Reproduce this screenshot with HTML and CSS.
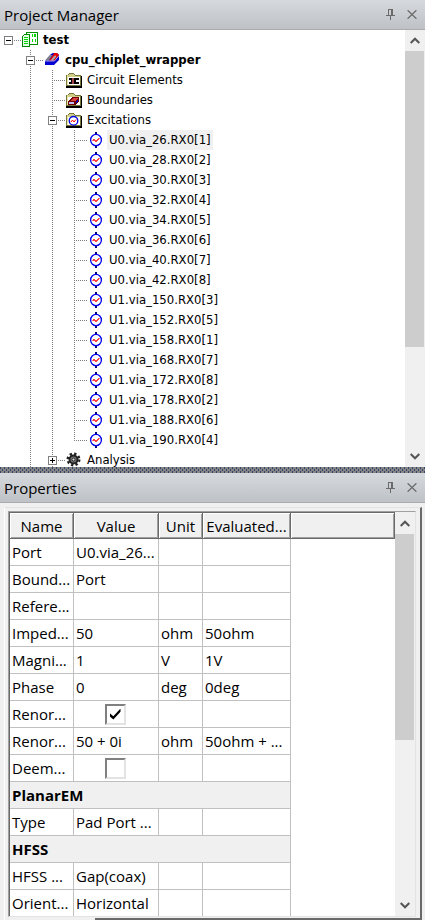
FILE: index.html
```html
<!DOCTYPE html>
<html lang="en">
<head>
<meta charset="utf-8">
<meta name="viewport" content="width=device-width, initial-scale=1">
<title>Project Manager</title>
<link rel="stylesheet" href="styles.css">
</head>
<body>
<svg class="defs" aria-hidden="true">
  <symbol id="pin" viewBox="0 0 9 11"><path d="M2 0h5v6h2v1H5v4H4V7H0V6h2zM3 1v5h2V1z" fill="#6a6a6a" fill-rule="evenodd"/></symbol>
  <symbol id="close" viewBox="0 0 10 9"><path d="M.6.3l8.800 8.400M9.400.3L.6 8.700" stroke="#6a6a6a" stroke-width="1.300" fill="none"/></symbol>
  <symbol id="up" viewBox="0 0 10 7"><path d="M.7 6L5 1.700 9.300 6" stroke="#555" stroke-width="2" fill="none"/></symbol>
  <symbol id="down" viewBox="0 0 10 7"><path d="M.7 1L5 5.300 9.300 1" stroke="#555" stroke-width="2" fill="none"/></symbol>
  <symbol id="port" viewBox="0 0 16 16">
    <path d="M7 0h2v3H7zM7 13h2v3H7z" fill="#000070"/>
    <ellipse cx="8" cy="8" rx="5.400" ry="5.700" fill="#fff" stroke="#0000e8" stroke-width="1.300"/>
    <path d="M4.500 8.500h1v-1h1v1h1v1h1v-1h1v-1h1v-1h1" fill="none" stroke="#f00" stroke-width="1"/>
  </symbol>
  <symbol id="folder" viewBox="0 0 16 16">
    <path d="M0 3h2V2h1V1h5v1h1v1h6v1h1v12H0z" fill="#000"/>
    <path d="M0 3h2V2h1V1h5v1h1v1h6v11H0z" fill="#77763a"/>
    <path d="M3 2h5v1h1v1h5v1H1V3h2z" fill="#cfcd86"/>
    <path d="M1 4h1v9H1z" fill="#e6e4a0"/>
    <path d="M2 5h12v8H2z" fill="#fff"/>
  </symbol>
</svg>

<main class="app">
  <section class="panel project" aria-label="Project Manager">
    <header class="titlebar">
      <h2 class="title">Project Manager</h2>
      <button class="tool" aria-label="Pin"><svg width="9" height="11"><use href="#pin"/></svg></button>
      <button class="tool" aria-label="Close"><svg width="10" height="9"><use href="#close"/></svg></button>
    </header>
    <div class="viewport">
      <ul class="tree">
        <li class="root">
          <div class="row strong"><span class="twig"><button class="toggle" aria-label="Collapse test"></button></span>
            <svg class="icon" viewBox="0 0 16 16" shape-rendering="crispEdges"><path d="M4 0h12v13H4z" fill="#009000"/><path d="M5 1h10v11H5z" fill="#fff"/><path d="M0 4l2-2h6v13H0z" fill="#008800"/><path d="M1 4l1-1h5v11H1z" fill="#e4ffe4"/><path d="M2 5h4v1H2zM2 7h4v1H2zM2 9h4v1H2zM2 11h4v1H2zM10 2h1v3h-1zM12 2h2v3h-2zM10 7h1v3h-1zM13 7h1v3h-1z" fill="#00d800"/></svg>
            <span class="label">test</span></div>
          <ul>
            <li>
              <div class="row strong"><span class="twig"><button class="toggle" aria-label="Collapse cpu_chiplet_wrapper"></button></span>
                <svg class="icon" viewBox="0 0 16 16"><path d="M1 9L7 2l2-1h4l2 2v5l-5 5H1z" fill="#0000d0"/><path d="M1 8.500L6 3h2.500L5 8.500z" fill="#808088"/><path d="M5 8.500L9 3l1-2h3l2 2-4.500 5.500z" fill="#e80000"/><path d="M6.500 8.500L10 4l2-.5V5L9 8.500z" fill="#a8a8b0"/><path d="M1 9h9.500L15 3.500" fill="none" stroke="#e8e8ff" stroke-width=".7"/></svg>
                <span class="label">cpu_chiplet_wrapper</span></div>
              <ul>
                <li><div class="row"><span class="twig"></span><svg class="icon" viewBox="0 0 16 16" shape-rendering="crispEdges"><use href="#folder"/><path d="M6 6h4v6H6z" fill="#a04040"/><path d="M3 6h3v2H3zM3 10h3v2H3zM10 6h3v2h-3zM10 10h3v2h-3zM5 6h1v6H5zM8 6h2v6H8z"/></svg><span class="label">Circuit Elements</span></div></li>
                <li><div class="row"><span class="twig"></span><svg class="icon" viewBox="0 0 16 16" shape-rendering="crispEdges"><use href="#folder"/><path d="M2 9l4-4h7v4l-4 4H2z" fill="#700000"/><path d="M4 9l3-3h5L9 9z" fill="#d84040"/><path d="M3 10h5v2H3z" fill="#c0c0ff"/><path d="M10 9l2-2v2l-2 2z" fill="#0000c0"/></svg><span class="label">Boundaries</span></div></li>
                <li>
                  <div class="row"><span class="twig"><button class="toggle" aria-label="Collapse Excitations"></button></span><svg class="icon" viewBox="0 0 16 16"><use href="#folder"/><circle cx="7.500" cy="8.800" r="4.300" fill="#fff" stroke="#0000e8" stroke-width="1.300"/><path d="M5 10l1.500-2 1.500 2 2-2.500" fill="none" stroke="#f00"/></svg><span class="label">Excitations</span></div>
                  <ul>
                    <li><div class="row"><span class="twig"></span><svg class="icon"><use href="#port"/></svg><span class="label selected">U0.via_26.RX0[1]</span></div></li>
                    <li><div class="row"><span class="twig"></span><svg class="icon"><use href="#port"/></svg><span class="label">U0.via_28.RX0[2]</span></div></li>
                    <li><div class="row"><span class="twig"></span><svg class="icon"><use href="#port"/></svg><span class="label">U0.via_30.RX0[3]</span></div></li>
                    <li><div class="row"><span class="twig"></span><svg class="icon"><use href="#port"/></svg><span class="label">U0.via_32.RX0[4]</span></div></li>
                    <li><div class="row"><span class="twig"></span><svg class="icon"><use href="#port"/></svg><span class="label">U0.via_34.RX0[5]</span></div></li>
                    <li><div class="row"><span class="twig"></span><svg class="icon"><use href="#port"/></svg><span class="label">U0.via_36.RX0[6]</span></div></li>
                    <li><div class="row"><span class="twig"></span><svg class="icon"><use href="#port"/></svg><span class="label">U0.via_40.RX0[7]</span></div></li>
                    <li><div class="row"><span class="twig"></span><svg class="icon"><use href="#port"/></svg><span class="label">U0.via_42.RX0[8]</span></div></li>
                    <li><div class="row"><span class="twig"></span><svg class="icon"><use href="#port"/></svg><span class="label">U1.via_150.RX0[3]</span></div></li>
                    <li><div class="row"><span class="twig"></span><svg class="icon"><use href="#port"/></svg><span class="label">U1.via_152.RX0[5]</span></div></li>
                    <li><div class="row"><span class="twig"></span><svg class="icon"><use href="#port"/></svg><span class="label">U1.via_158.RX0[1]</span></div></li>
                    <li><div class="row"><span class="twig"></span><svg class="icon"><use href="#port"/></svg><span class="label">U1.via_168.RX0[7]</span></div></li>
                    <li><div class="row"><span class="twig"></span><svg class="icon"><use href="#port"/></svg><span class="label">U1.via_172.RX0[8]</span></div></li>
                    <li><div class="row"><span class="twig"></span><svg class="icon"><use href="#port"/></svg><span class="label">U1.via_178.RX0[2]</span></div></li>
                    <li><div class="row"><span class="twig"></span><svg class="icon"><use href="#port"/></svg><span class="label">U1.via_188.RX0[6]</span></div></li>
                    <li class="last"><div class="row"><span class="twig"></span><svg class="icon"><use href="#port"/></svg><span class="label">U1.via_190.RX0[4]</span></div></li>
                  </ul>
                </li>
                <li><div class="row"><span class="twig"><button class="toggle closed" aria-label="Expand Analysis"></button></span><svg class="icon" viewBox="0 0 16 16"><circle cx="7.500" cy="7.500" r="5.800" fill="none" stroke="#222" stroke-width="2.400" stroke-dasharray="2.300 2.250"/><circle cx="7.500" cy="7.500" r="4" fill="#777" stroke="#222" stroke-width="2"/><circle cx="7.500" cy="7.500" r="1.500" fill="#ddd" stroke="#222"/></svg><span class="label">Analysis</span></div></li>
              </ul>
            </li>
          </ul>
        </li>
      </ul>
      <div class="scrollbar">
        <button class="arrow" aria-label="Scroll up"><svg width="10" height="7"><use href="#up"/></svg></button>
        <div class="track"><div class="thumb tree-thumb"></div></div>
        <button class="arrow" aria-label="Scroll down"><svg width="10" height="7"><use href="#down"/></svg></button>
      </div>
    </div>
  </section>

  <div class="splitter"></div>

  <section class="panel properties" aria-label="Properties">
    <header class="titlebar">
      <h2 class="title">Properties</h2>
      <button class="tool" aria-label="Pin"><svg width="9" height="11"><use href="#pin"/></svg></button>
      <button class="tool" aria-label="Close"><svg width="10" height="9"><use href="#close"/></svg></button>
    </header>
    <div class="sheet">
      <div class="well">
        <div class="grid">
          <table>
            <colgroup><col class="c-name"><col class="c-value"><col class="c-unit"><col class="c-eval"><col></colgroup>
            <thead><tr><th>Name</th><th>Value</th><th>Unit</th><th>Evaluated...</th><th></th></tr></thead>
            <tbody>
              <tr><td>Port</td><td>U0.via_26...</td><td></td><td></td></tr>
              <tr><td>Bound...</td><td>Port</td><td></td><td></td></tr>
              <tr><td>Refere...</td><td></td><td></td><td></td></tr>
              <tr><td>Imped...</td><td>50</td><td>ohm</td><td>50ohm</td></tr>
              <tr><td>Magni...</td><td>1</td><td>V</td><td>1V</td></tr>
              <tr><td>Phase</td><td>0</td><td>deg</td><td>0deg</td></tr>
              <tr><td><label for="renorm">Renor...</label></td><td class="check"><input type="checkbox" id="renorm" checked></td><td></td><td></td></tr>
              <tr><td>Renor...</td><td>50 + 0i</td><td>ohm</td><td>50ohm + ...</td></tr>
              <tr><td><label for="deembed">Deem...</label></td><td class="check"><input type="checkbox" id="deembed"></td><td></td><td></td></tr>
              <tr class="group"><th colspan="4">PlanarEM</th></tr>
              <tr><td>Type</td><td>Pad Port ...</td><td></td><td></td></tr>
              <tr class="group"><th colspan="4">HFSS</th></tr>
              <tr><td>HFSS ...</td><td>Gap(coax)</td><td></td><td></td></tr>
              <tr><td>Orient...</td><td>Horizontal</td><td></td><td></td></tr>
            </tbody>
          </table>
        </div>
        <div class="scrollbar">
          <button class="arrow" aria-label="Scroll up"><svg width="10" height="7"><use href="#up"/></svg></button>
          <div class="track"><div class="thumb grid-thumb"></div></div>
          <button class="arrow" aria-label="Scroll down"><svg width="10" height="7"><use href="#down"/></svg></button>
        </div>
      </div>
      <div class="tabs"><div class="tab"></div><div class="edge"></div></div>
    </div>
  </section>
</main>
</body>
</html>
```
FILE: styles.css
```css
* { box-sizing: border-box; }

body {
  margin: 0;
  background: #f0f0f0;
  color: #000;
  font-family: "Open Sans", "Noto Sans", sans-serif;
}

.defs { display: none; }

button {
  padding: 0;
  border: 0;
  background: none;
}

.app {
  display: flex;
  flex-direction: column;
  height: 100vh;
}

.panel {
  display: flex;
  flex-direction: column;
  min-height: 0;
}

.project { flex: 467 1 0; }
.properties { flex: 447 1 0; }

/* Title bars */
.titlebar {
  display: flex;
  flex: none;
  align-items: center;
  height: 30px;
  padding: 0 8px 0 4px;
  border-bottom: 1px solid #a9abad;
  background: linear-gradient(#d6dadf, #bec1c5);
}

.title {
  flex: 1;
  margin: 0;
  font-size: 15px;
  font-weight: 400;
  line-height: 20px;
}

.tool {
  display: flex;
  align-items: center;
  justify-content: center;
  width: 10px;
  height: 20px;
  margin-left: 12px;
}

.splitter {
  flex: none;
  height: 6px;
  background-color: #858585;
  background-image:
    conic-gradient(at 1px 2px, transparent 75%, #34466c 0),
    conic-gradient(at 1px 2px, transparent 75%, #34466c 0);
  background-position: 0 0, 2px 2px;
  background-size: 4px 4px;
}

/* Scroll bars */
.scrollbar {
  display: flex;
  flex: none;
  flex-direction: column;
  width: 20px;
  background: #f0f0f0;
}

.arrow {
  display: flex;
  flex: none;
  align-items: center;
  justify-content: center;
  width: 19px;
  height: 21px;
}

.track { flex: 1; }

.thumb {
  width: 19px;
  background: #cdcdcd;
}

.tree-thumb { height: 75%; }
.grid-thumb { height: 57%; }

/* Project tree */
.viewport {
  display: flex;
  flex: 1;
  min-height: 0;
  background: #fff;
}

.tree {
  flex: 1;
  overflow: hidden;
  font-family: "DejaVu Sans Condensed", "DejaVu Sans", sans-serif;
  font-size: 13px;
}

.tree,
.tree ul {
  margin: 0;
  padding: 0;
  list-style: none;
}

.tree ul { padding-left: 22px; }

.tree li {
  background: repeating-linear-gradient(#808080 0 1px, transparent 1px 2px) 8px 0 / 1px 100% no-repeat;
}

.tree .last { background-size: 1px 10px; }
.tree .root { background: none; }

.row {
  display: flex;
  align-items: center;
  height: 20px;
}

.twig {
  display: flex;
  flex: none;
  align-items: center;
  width: 22px;
  height: 20px;
  background: repeating-linear-gradient(90deg, #808080 0 1px, transparent 1px 2px) 8px 10px / 13px 1px no-repeat;
}

.toggle {
  width: 9px;
  height: 9px;
  margin: 1px 0 0 4px;
  border: 1px solid #808080;
  background: linear-gradient(#000, #000) center / 5px 1px no-repeat #fff;
}

.toggle.closed {
  background:
    linear-gradient(#000, #000) center / 5px 1px no-repeat,
    linear-gradient(#000, #000) center / 1px 5px no-repeat #fff;
}

.icon {
  flex: none;
  width: 16px;
  height: 16px;
}

.label {
  margin-left: 3px;
  padding: 0 2px;
  line-height: 20px;
  white-space: nowrap;
}

.selected { background: #f0f0f0; }
.strong { font-weight: 700; }

/* Property sheet */
.sheet {
  display: flex;
  flex: 1;
  flex-direction: column;
  min-height: 0;
  margin: 4px 3px 0 4px;
  border: solid;
  border-width: 1px 2px 0 1px;
  border-color: #e3e3e3 #696969 #e3e3e3 #fff;
}

.well {
  display: flex;
  flex: 1;
  min-height: 0;
  margin: 3px 4px 0 3px;
  border: 1px solid;
  border-color: #a0a0a0 #e3e3e3 #e3e3e3 #a0a0a0;
  background: #fff;
}

.well .scrollbar { padding-top: 1px; }

.grid {
  flex: 1;
  overflow: hidden;
  border: solid #696969;
  border-width: 1px 0 0 1px;
}

table {
  width: 100%;
  border-collapse: separate;
  border-spacing: 0;
  table-layout: fixed;
  font-size: 15px;
  line-height: 20px;
}

.c-name { width: 64px; }
.c-value { width: 85px; }
.c-unit { width: 44px; }
.c-eval { width: 88px; }

th,
td {
  overflow: hidden;
  height: 27px;
  padding: 0 0 0 2px;
  border: solid #c0c0c0;
  border-width: 0 1px 1px 0;
  font-weight: 400;
  text-align: left;
  white-space: nowrap;
}

thead th {
  height: 26px;
  padding: 0;
  border-color: #696969;
  background: #f0f0f0;
  box-shadow: inset 1px 1px #fff, inset -1px -1px #a0a0a0;
  text-align: center;
}

.group th {
  background: #f0f0f0;
  font-weight: 700;
}

.check {
  padding: 0 2px 0 0;
  text-align: center;
}

.check input {
  display: block;
  width: 21px;
  height: 21px;
  margin: 0 auto;
  appearance: none;
  border: 2px solid;
  border-color: #808080 #e3e3e3 #e3e3e3 #808080;
  background: #fff;
}

.check input:checked::before {
  display: block;
  width: 11px;
  height: 11px;
  margin: 3px;
  background: #000;
  clip-path: polygon(0 40%, 35% 70%, 100% 0, 100% 30%, 35% 100%, 0 70%);
  content: "";
}

.tabs {
  display: flex;
  flex: none;
  height: 3px;
}

.tab { width: 90px; }

.edge {
  flex: 1;
  border-bottom: 2px solid #696969;
}
```
